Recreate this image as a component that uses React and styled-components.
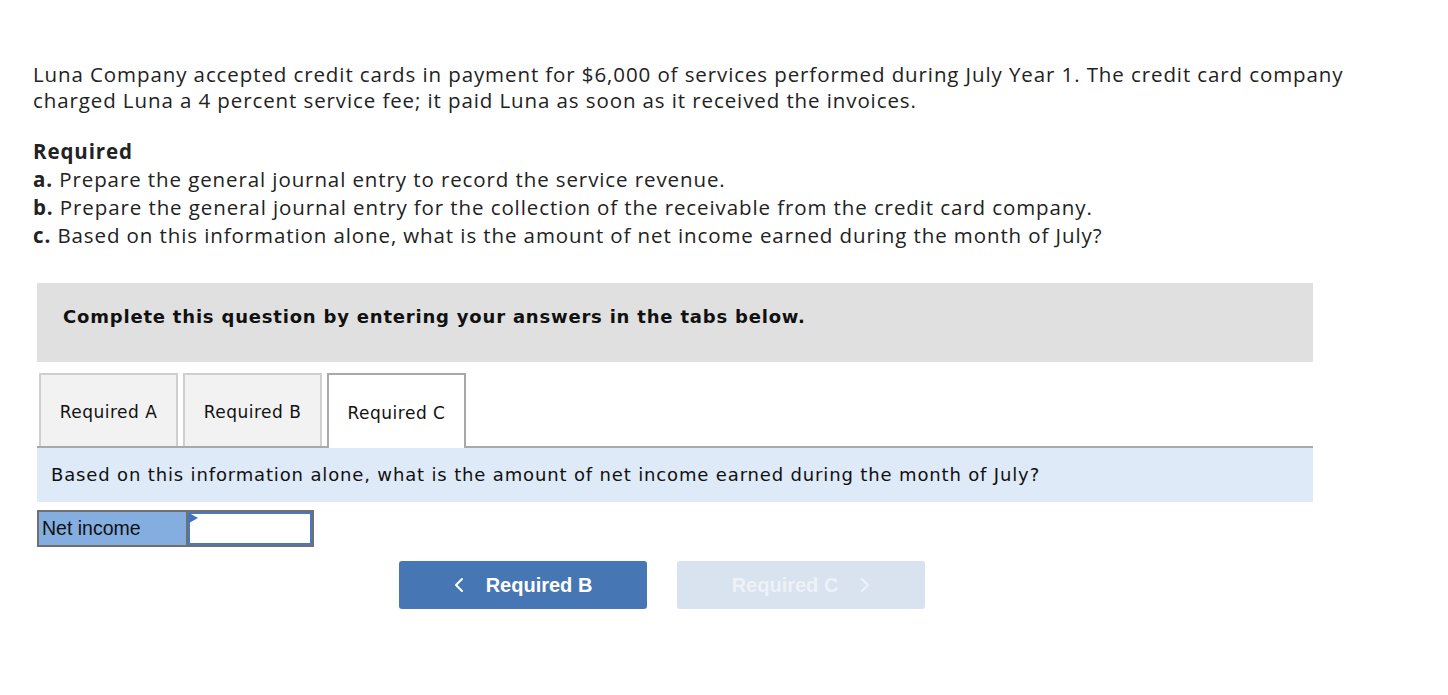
import React from "react";
import styled, { createGlobalStyle } from "styled-components";

const Global = createGlobalStyle`
  body {
    margin: 0;
    background: #fff;
    color: #222;
    font-family: "Open Sans", Lato, sans-serif;
  }
`;

const Page = styled.div`
  padding: 61px 0 40px 33px;
  width: 1280px;
`;

const Intro = styled.p`
  margin: 0;
  font-size: 20.5px;
  line-height: 26px;
  letter-spacing: 0.9px;
  color: #222;
  width: 1400px;
`;

const Reqs = styled.div`
  margin-top: 24px;
  font-size: 20.5px;
  line-height: 28px;
  letter-spacing: 0.9px;
  b {
    font-weight: 700;
  }
`;

const Banner = styled.div`
  margin: 34px 0 0 4px;
  width: 1276px;
  height: 79px;
  background: #e0e0e0;
  box-sizing: border-box;
  padding: 23px 0 0 26px;
  font-family: "DejaVu Sans", Verdana, sans-serif;
  font-weight: 700;
  font-size: 18px;
  letter-spacing: 0.8px;
  color: #111;
`;

const TabRow = styled.div`
  margin: 11px 0 0 4px;
  width: 1276px;
  display: flex;
  align-items: flex-end;
  gap: 5px;
  padding-left: 2px;
  box-sizing: border-box;
  border-bottom: 2px solid #a9a9a9;
`;

const Tab = styled.div`
  width: 139px;
  box-sizing: border-box;
  display: flex;
  align-items: center;
  justify-content: center;
  padding-top: 2px;
  font-family: "DejaVu Sans", Verdana, sans-serif;
  font-size: 17px;
  letter-spacing: 0.5px;
  color: #111;
  background: ${(p) => (p.$active ? "#fff" : "#f2f2f2")};
  border: 2px solid ${(p) => (p.$active ? "#a9a9a9" : "#cfcfcf")};
  border-bottom: none;
  margin-bottom: ${(p) => (p.$active ? "-2px" : "0")};
  height: ${(p) => (p.$active ? "75px" : "73px")};
`;

const Question = styled.div`
  margin-left: 4px;
  width: 1276px;
  height: 54px;
  background: #deeaf7;
  box-sizing: border-box;
  padding: 16px 0 0 14px;
  font-family: "DejaVu Sans", Verdana, sans-serif;
  font-size: 18px;
  letter-spacing: 0.85px;
  color: #111;
`;

const AnswerRow = styled.div`
  margin: 8px 0 0 4px;
  display: flex;
  width: 277px;
  height: 37px;
  border: 2px solid #707070;
  box-sizing: border-box;
`;

const Label = styled.div`
  width: 149px;
  background: #84ade0;
  font-family: "Liberation Sans", Arial, sans-serif;
  font-size: 19.5px;
  color: #111;
  display: flex;
  align-items: center;
  padding-left: 3px;
  box-sizing: border-box;
  border-right: 2px solid #707070;
`;

const InputCell = styled.div`
  position: relative;
  flex: 1;
  background: #fff;
  border: 2px solid #4a78bd;
`;

const Marker = styled.span`
  position: absolute;
  top: -1px;
  left: -1px;
  width: 0;
  height: 0;
  border-top: 5px solid transparent;
  border-bottom: 5px solid transparent;
  border-left: 9px solid #3f72c0;
`;

const NavRow = styled.div`
  margin: 14px 0 0 366px;
  display: flex;
  gap: 30px;
`;

const NavButton = styled.div`
  width: 248px;
  height: 48px;
  border-radius: 3px;
  background: ${(p) => (p.$disabled ? "#d9e3ef" : "#4776b5")};
  color: ${(p) => (p.$disabled ? "#eef2f8" : "#fff")};
  font-family: "Liberation Sans", Arial, sans-serif;
  font-weight: 700;
  font-size: 20px;
  display: flex;
  align-items: center;
  justify-content: center;
  gap: 22px;
`;

const Chevron = ({ dir }) => (
  <svg width="10" height="16" viewBox="0 0 10 16" fill="none">
    <path
      d={dir === "left" ? "M8 2 L2 8 L8 14" : "M2 2 L8 8 L2 14"}
      stroke="currentColor"
      strokeWidth="2"
      strokeLinecap="round"
      strokeLinejoin="round"
    />
  </svg>
);

export default function App() {
  return (
    <Page>
      <Global />
      <Intro>
        Luna Company accepted credit cards in payment for $6,000 of services performed during July Year 1. The credit card company
        <br />
        charged Luna a 4 percent service fee; it paid Luna as soon as it received the invoices.
      </Intro>
      <Reqs>
        <b>Required</b>
        <div><b>a.</b> Prepare the general journal entry to record the service revenue.</div>
        <div><b>b.</b> Prepare the general journal entry for the collection of the receivable from the credit card company.</div>
        <div><b>c.</b> Based on this information alone, what is the amount of net income earned during the month of July?</div>
      </Reqs>
      <Banner>Complete this question by entering your answers in the tabs below.</Banner>
      <TabRow>
        <Tab>Required A</Tab>
        <Tab>Required B</Tab>
        <Tab $active>Required C</Tab>
      </TabRow>
      <Question>Based on this information alone, what is the amount of net income earned during the month of July?</Question>
      <AnswerRow>
        <Label>Net income</Label>
        <InputCell>
          <Marker />
        </InputCell>
      </AnswerRow>
      <NavRow>
        <NavButton>
          <Chevron dir="left" />
          Required B
        </NavButton>
        <NavButton $disabled>
          Required C
          <Chevron dir="right" />
        </NavButton>
      </NavRow>
    </Page>
  );
}
